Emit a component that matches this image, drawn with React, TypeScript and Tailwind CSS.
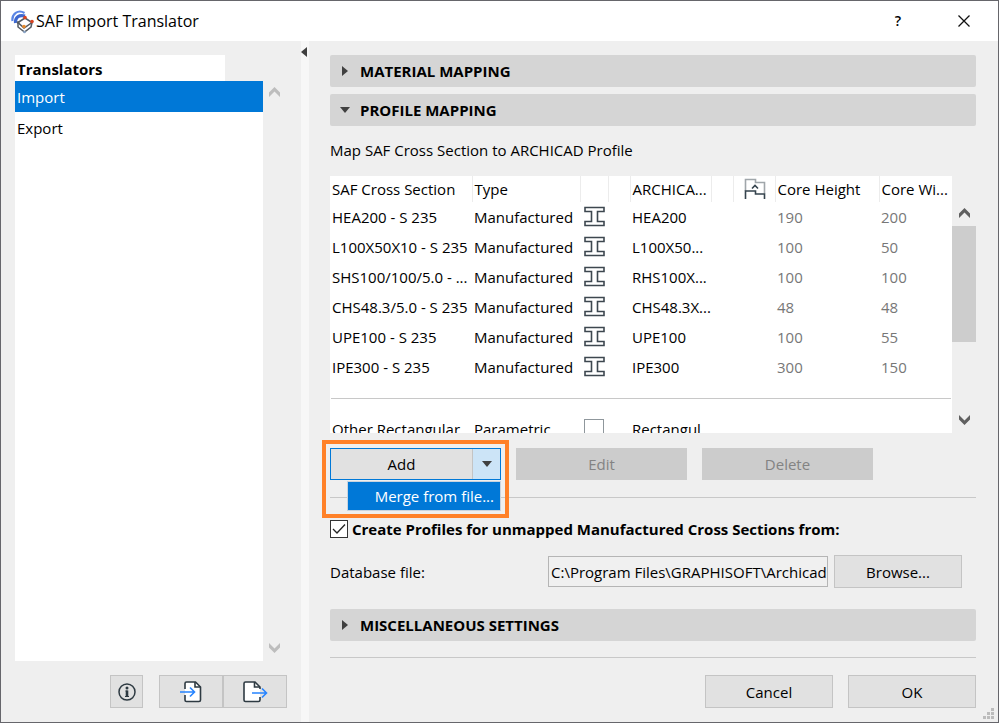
import { useState } from 'react';

const profiles = [
    { name: 'HEA200 - S 235', target: 'HEA200', height: '190', width: '200' },
    { name: 'L100X50X10 - S 235', target: 'L100X50...', height: '100', width: '50' },
    { name: 'SHS100/100/5.0 - ...', target: 'RHS100X...', height: '100', width: '100' },
    { name: 'CHS48.3/5.0 - S 235', target: 'CHS48.3X...', height: '48', width: '48' },
    { name: 'UPE100 - S 235', target: 'UPE100', height: '100', width: '55' },
    { name: 'IPE300 - S 235', target: 'IPE300', height: '300', width: '150' },
];

const buttonStyle = 'border border-[#c4c4c4] bg-[#e1e1e1] flex items-center justify-center';

function AppLogo() {
    return (
        <svg width="24" height="25" viewBox="0 0 24 25" fill="none">
            <path d="M1.5 12C.5 5 7 0 13.5 4" stroke="#5b86e5" strokeWidth="2.2" />
            <path d="M4.5 14C4 8 8 5.5 14 7" stroke="#3e68cf" strokeWidth="3.2" />
            <path d="M7 13.5L14 9l7 4.5-8 5.5z" fill="#fff" stroke="#555b63" strokeWidth="1.5" />
            <path d="M7 13.5v4.5l6.5 5 6.500-5 1-4.500" stroke="#555b63" strokeWidth="1.5" />
            <circle cx="14" cy="8.5" r="1.8" fill="#d8431f" />
            <circle cx="21" cy="12.5" r="1.8" fill="#d8431f" />
            <circle cx="13" cy="17.5" r="1.8" fill="#e98a2c" />
            <circle cx="7" cy="13.5" r="1.3" fill="#555b63" />
            <circle cx="13.5" cy="23" r="1.3" fill="#8ba6c9" />
        </svg>
    );
}

function Triangle({ direction }: { direction: 'left' | 'right' | 'down' }) {
    const points = {
        left: '6,0 6,10 0,5',
        right: '2,0 2,10 8,5',
        down: '0,2 10,2 5,8',
    };
    return (
        <svg width="10" height="10" viewBox="0 0 10 10" className="shrink-0">
            <polygon points={points[direction]} fill="#404040" />
        </svg>
    );
}

function Chevron({ up, color }: { up?: boolean; color: string }) {
    return (
        <svg width="11" height="10" viewBox="0 0 11 10">
            <path d={up ? 'M0 5.5L5.5 0 11 5.5V10L5.5 4.5 0 10z' : 'M0 4.5L5.5 10 11 4.5V0L5.5 5.5 0 0z'} fill={color} />
        </svg>
    );
}

function BeamIcon() {
    return (
        <svg width="22" height="22" viewBox="0 0 22 22" fill="none" stroke="#3d474f" strokeWidth="1.6">
            <path d="M1 1.5h19v4h-6.5v10h6.5v4h-19v-4h6.5v-10h-6.5z" />
        </svg>
    );
}

function FlagIcon() {
    return (
        <svg width="22" height="22" viewBox="0 0 22 22" fill="none" strokeWidth="1.6">
            <path d="M1.5 13V1.5h10v3h9v11" stroke="#a0a6aa" />
            <path d="M1.5 21v-8h10v3h9v5" stroke="#35434d" />
            <path d="M8 10.500l3-3 3 3" stroke="#35434d" />
        </svg>
    );
}

function SectionHeader({ title, open, onClick }: { title: string; open: boolean; onClick: () => void }) {
    return (
        <button onClick={onClick} className="flex h-8 w-full items-center gap-2.5 rounded-xs bg-[#d5d5d5] px-2.5 font-bold">
            <Triangle direction={open ? 'down' : 'right'} />
            {title}
        </button>
    );
}

export default function App() {
    const [selected, setSelected] = useState('Import');
    const [openSection, setOpenSection] = useState('PROFILE MAPPING');
    const [createProfiles, setCreateProfiles] = useState(true);

    const toggle = (title: string) => setOpenSection(openSection === title ? '' : title);

    return (
        <div className="relative flex min-h-screen flex-col border border-[#66666b] bg-[#efefef] font-[family-name:'Open_Sans',sans-serif] text-[15px] leading-5 text-black">
            {/* Title bar */}
            <header className="flex h-10 items-center bg-white pr-6 pl-2.5">
                <AppLogo />
                <h1 className="flex-1 pl-px text-base">SAF Import Translator</h1>
                <button className="mr-[46px] w-5 text-sm font-semibold" aria-label="Help">?</button>
                <button aria-label="Close" className="flex w-5 justify-center">
                    <svg width="12" height="12" viewBox="0 0 12 12" stroke="#111" strokeWidth="1.3">
                        <path d="M.5.5l11 11M11.5.5l-11 11" />
                    </svg>
                </button>
            </header>

            <div className="flex flex-1">
                {/* Translators */}
                <aside className="flex w-[300px] shrink-0 flex-col pt-3.5 pl-3.5">
                    <div className="flex flex-1">
                        <div className="flex w-[248px] flex-col">
                            <h2 className="h-[26px] w-[210px] bg-white pt-1 pl-0.5 font-bold">Translators</h2>
                            <div className="flex-1 bg-white">
                                {['Import', 'Export'].map(item => (
                                    <button
                                        key={item}
                                        onClick={() => setSelected(item)}
                                        className={`block h-[31px] w-full pl-0.5 text-left ${selected === item ? 'bg-[#0078d7] text-white' : ''}`}
                                    >
                                        {item}
                                    </button>
                                ))}
                            </div>
                        </div>
                        <div className="flex flex-col justify-between pt-8 pb-2 pl-1.5">
                            <Chevron up color="#bdbdbd" />
                            <Chevron color="#bdbdbd" />
                        </div>
                    </div>
                    <div className="flex pt-3.5 pb-3.5 pl-[95px]">
                        <button className={`mr-4 h-[33px] w-[33px] ${buttonStyle}`} aria-label="Info">
                            <svg width="18" height="18" viewBox="0 0 18 18" fill="none" stroke="#2e3a42" strokeWidth="1.5">
                                <circle cx="9" cy="9" r="8" />
                                <path d="M7.500 8h2M7 13.500h4" strokeWidth="1" />
                                <path d="M9 7.500v6" strokeWidth="2.6" />
                                <circle cx="9" cy="5" r="1.5" fill="#2e3a42" stroke="none" />
                            </svg>
                        </button>
                        <button className={`h-[33px] w-16 ${buttonStyle}`} aria-label="Import translator">
                            <svg width="24" height="24" viewBox="0 0 24 24" fill="none" strokeWidth="1.6">
                                <path d="M6 9V3.5q0-1.5 1.5-1.5h9l5 5v13q0 1.5-1.5 1.5h-12.5q-1.5 0-1.5-1.5V15" fill="#fff" stroke="#2e3a42" />
                                <path d="M16 2v5h5.5" stroke="#2e3a42" />
                                <path d="M1 12h14M11 7.5l4.5 4.5-4.5 4.5" stroke="#2684ff" />
                            </svg>
                        </button>
                        <button className={`h-[33px] w-16 ${buttonStyle}`} aria-label="Export translator">
                            <svg width="26" height="24" viewBox="0 0 26 24" fill="none" strokeWidth="1.6">
                                <path d="M18 9V7l-5-5H3.5Q2 2 2 3.5V20q0 1.5 1.5 1.5h13q1.5 0 1.5-1.5v-3" fill="#fff" stroke="#2e3a42" />
                                <path d="M12.5 2v5H18" stroke="#2e3a42" />
                                <path d="M10 13h14M20 8.5l4.5 4.5-4.5 4.5" stroke="#2684ff" />
                            </svg>
                        </button>
                    </div>
                </aside>

                <div className="w-2 shrink-0 bg-[#f7f7f7] pt-1.5">
                    <Triangle direction="left" />
                </div>

                {/* Settings */}
                <main className="flex min-w-0 flex-1 flex-col pt-3.5 pr-[22px] pb-3.5 pl-[21px]">
                    <SectionHeader title="MATERIAL MAPPING" open={openSection === 'MATERIAL MAPPING'} onClick={() => toggle('MATERIAL MAPPING')} />
                    <div className="h-[7px]" />
                    <SectionHeader title="PROFILE MAPPING" open={openSection === 'PROFILE MAPPING'} onClick={() => toggle('PROFILE MAPPING')} />
                    <p className="pt-3.5 pb-4">Map SAF Cross Section to ARCHICAD Profile</p>

                    <div className="flex h-[257px]">
                        <div className="min-w-0 flex-1 overflow-hidden bg-white">
                            <table className="w-full table-fixed text-left whitespace-nowrap">
                                <colgroup>
                                    <col className="w-[142px]" />
                                    <col className="w-[108px]" />
                                    <col className="w-[28px]" />
                                    <col className="w-[22px]" />
                                    <col className="w-[81px]" />
                                    <col className="w-[22px]" />
                                    <col className="w-[42px]" />
                                    <col className="w-[104px]" />
                                    <col />
                                </colgroup>
                                <thead>
                                    <tr className="h-[26px] divide-x divide-[#ececec] *:p-0 *:pl-0.5 *:font-normal">
                                        <th>SAF Cross Section</th>
                                        <th>Type</th>
                                        <th />
                                        <th />
                                        <th>ARCHICA...</th>
                                        <th />
                                        <th><div className="flex justify-center"><FlagIcon /></div></th>
                                        <th>Core Height</th>
                                        <th>Core Wi...</th>
                                    </tr>
                                </thead>
                                <tbody>
                                    {profiles.map(p => (
                                        <tr key={p.name} className="h-[30px] *:p-0 *:pl-0.5">
                                            <td>{p.name}</td>
                                            <td>Manufactured</td>
                                            <td><div className="pl-0.5"><BeamIcon /></div></td>
                                            <td />
                                            <td>{p.target}</td>
                                            <td />
                                            <td />
                                            <td className="text-[#777]">{p.height}</td>
                                            <td className="text-[#777]">{p.width}</td>
                                        </tr>
                                    ))}
                                    <tr className="h-8">
                                        <td colSpan={9} className="p-0"><hr className="mx-px border-[#c8c8c8]" /></td>
                                    </tr>
                                    <tr className="h-[30px] *:p-0 *:pl-0.5">
                                        <td>Other Rectangular</td>
                                        <td>Parametric</td>
                                        <td><div className="pl-0.5"><div className="h-5 w-5 border border-[#8f979c]" /></div></td>
                                        <td />
                                        <td>Rectangul</td>
                                    </tr>
                                </tbody>
                            </table>
                        </div>
                        <div className="flex w-6 flex-col items-center pt-8 pb-2">
                            <Chevron up color="#606060" />
                            <div className="mt-2 h-[116px] w-full bg-[#cdcdcd]" />
                            <div className="flex-1" />
                            <Chevron color="#606060" />
                        </div>
                    </div>

                    <div className="flex pt-[15px] pb-[17px]">
                        <div className="relative mr-[15px] w-[171px]">
                            <div className="flex h-8 border border-[#0078d7]">
                                <button className="flex-1 bg-[#e1e1e1]">Add</button>
                                <button aria-label="More add options" className="flex w-7 items-center justify-center border-l border-[#c4c4c4] bg-[#cce4f7]">
                                    <Triangle direction="down" />
                                </button>
                            </div>
                            <div className="absolute top-[33px] right-0 z-10 w-[154px] border border-[#c8d4df] bg-[#0078d7]">
                                <button className="h-7 w-full pr-1.5 text-right text-white">Merge from file...</button>
                            </div>
                            <div className="pointer-events-none absolute -top-2 -right-2 -left-2 z-20 h-[78px] border-4 border-[#ff8128]" />
                        </div>
                        <button disabled className="mr-[15px] h-8 w-[171px] bg-[#cccccc] text-[#838383]">Edit</button>
                        <button disabled className="h-8 w-[171px] bg-[#cccccc] text-[#838383]">Delete</button>
                    </div>
                    <hr className="border-[#c8c8c8]" />

                    <label className="flex items-center gap-1 pt-[21px] font-bold">
                        <span className="relative flex h-[18px] w-[18px]">
                            <input
                                type="checkbox"
                                checked={createProfiles}
                                onChange={e => setCreateProfiles(e.target.checked)}
                                className="h-[18px] w-[18px] appearance-none border border-[#333] bg-white"
                            />
                            {createProfiles && (
                                <svg width="18" height="18" viewBox="0 0 18 18" fill="none" stroke="#222" strokeWidth="1.3" className="pointer-events-none absolute inset-0">
                                    <path d="M3 9l4 4 8-8.5" />
                                </svg>
                            )}
                        </span>
                        Create Profiles for unmapped Manufactured Cross Sections from:
                    </label>

                    <div className="flex items-center pt-4 pr-3.5 pb-[21px]">
                        <label htmlFor="database" className="flex-1">Database file:</label>
                        <input
                            id="database"
                            readOnly
                            defaultValue="C:\Program Files\GRAPHISOFT\Archicad"
                            className="mr-1.5 h-[31px] w-[280px] border border-[#b5b5b5] bg-[#f0f0f0] pl-0.5"
                        />
                        <button className={`h-[33px] w-32 ${buttonStyle}`}>Browse...</button>
                    </div>

                    <SectionHeader title="MISCELLANEOUS SETTINGS" open={openSection === 'MISCELLANEOUS SETTINGS'} onClick={() => toggle('MISCELLANEOUS SETTINGS')} />
                    <hr className="mt-4 border-[#c8c8c8]" />

                    <footer className="mt-auto flex justify-end gap-[15px]">
                        <button className={`h-[33px] w-32 ${buttonStyle}`}>Cancel</button>
                        <button className={`h-[33px] w-32 ${buttonStyle}`}>OK</button>
                    </footer>
                </main>
            </div>

            {/* Resize grip */}
            <svg width="11" height="11" viewBox="0 0 11 11" fill="#bcbcbc" className="absolute right-1 bottom-[3px]">
                <path d="M8 0h3v3H8zM4 4h3v3H4zM8 4h3v3H8zM0 8h3v3H0zM4 8h3v3H4zM8 8h3v3H8z" />
            </svg>
        </div>
    );
}
